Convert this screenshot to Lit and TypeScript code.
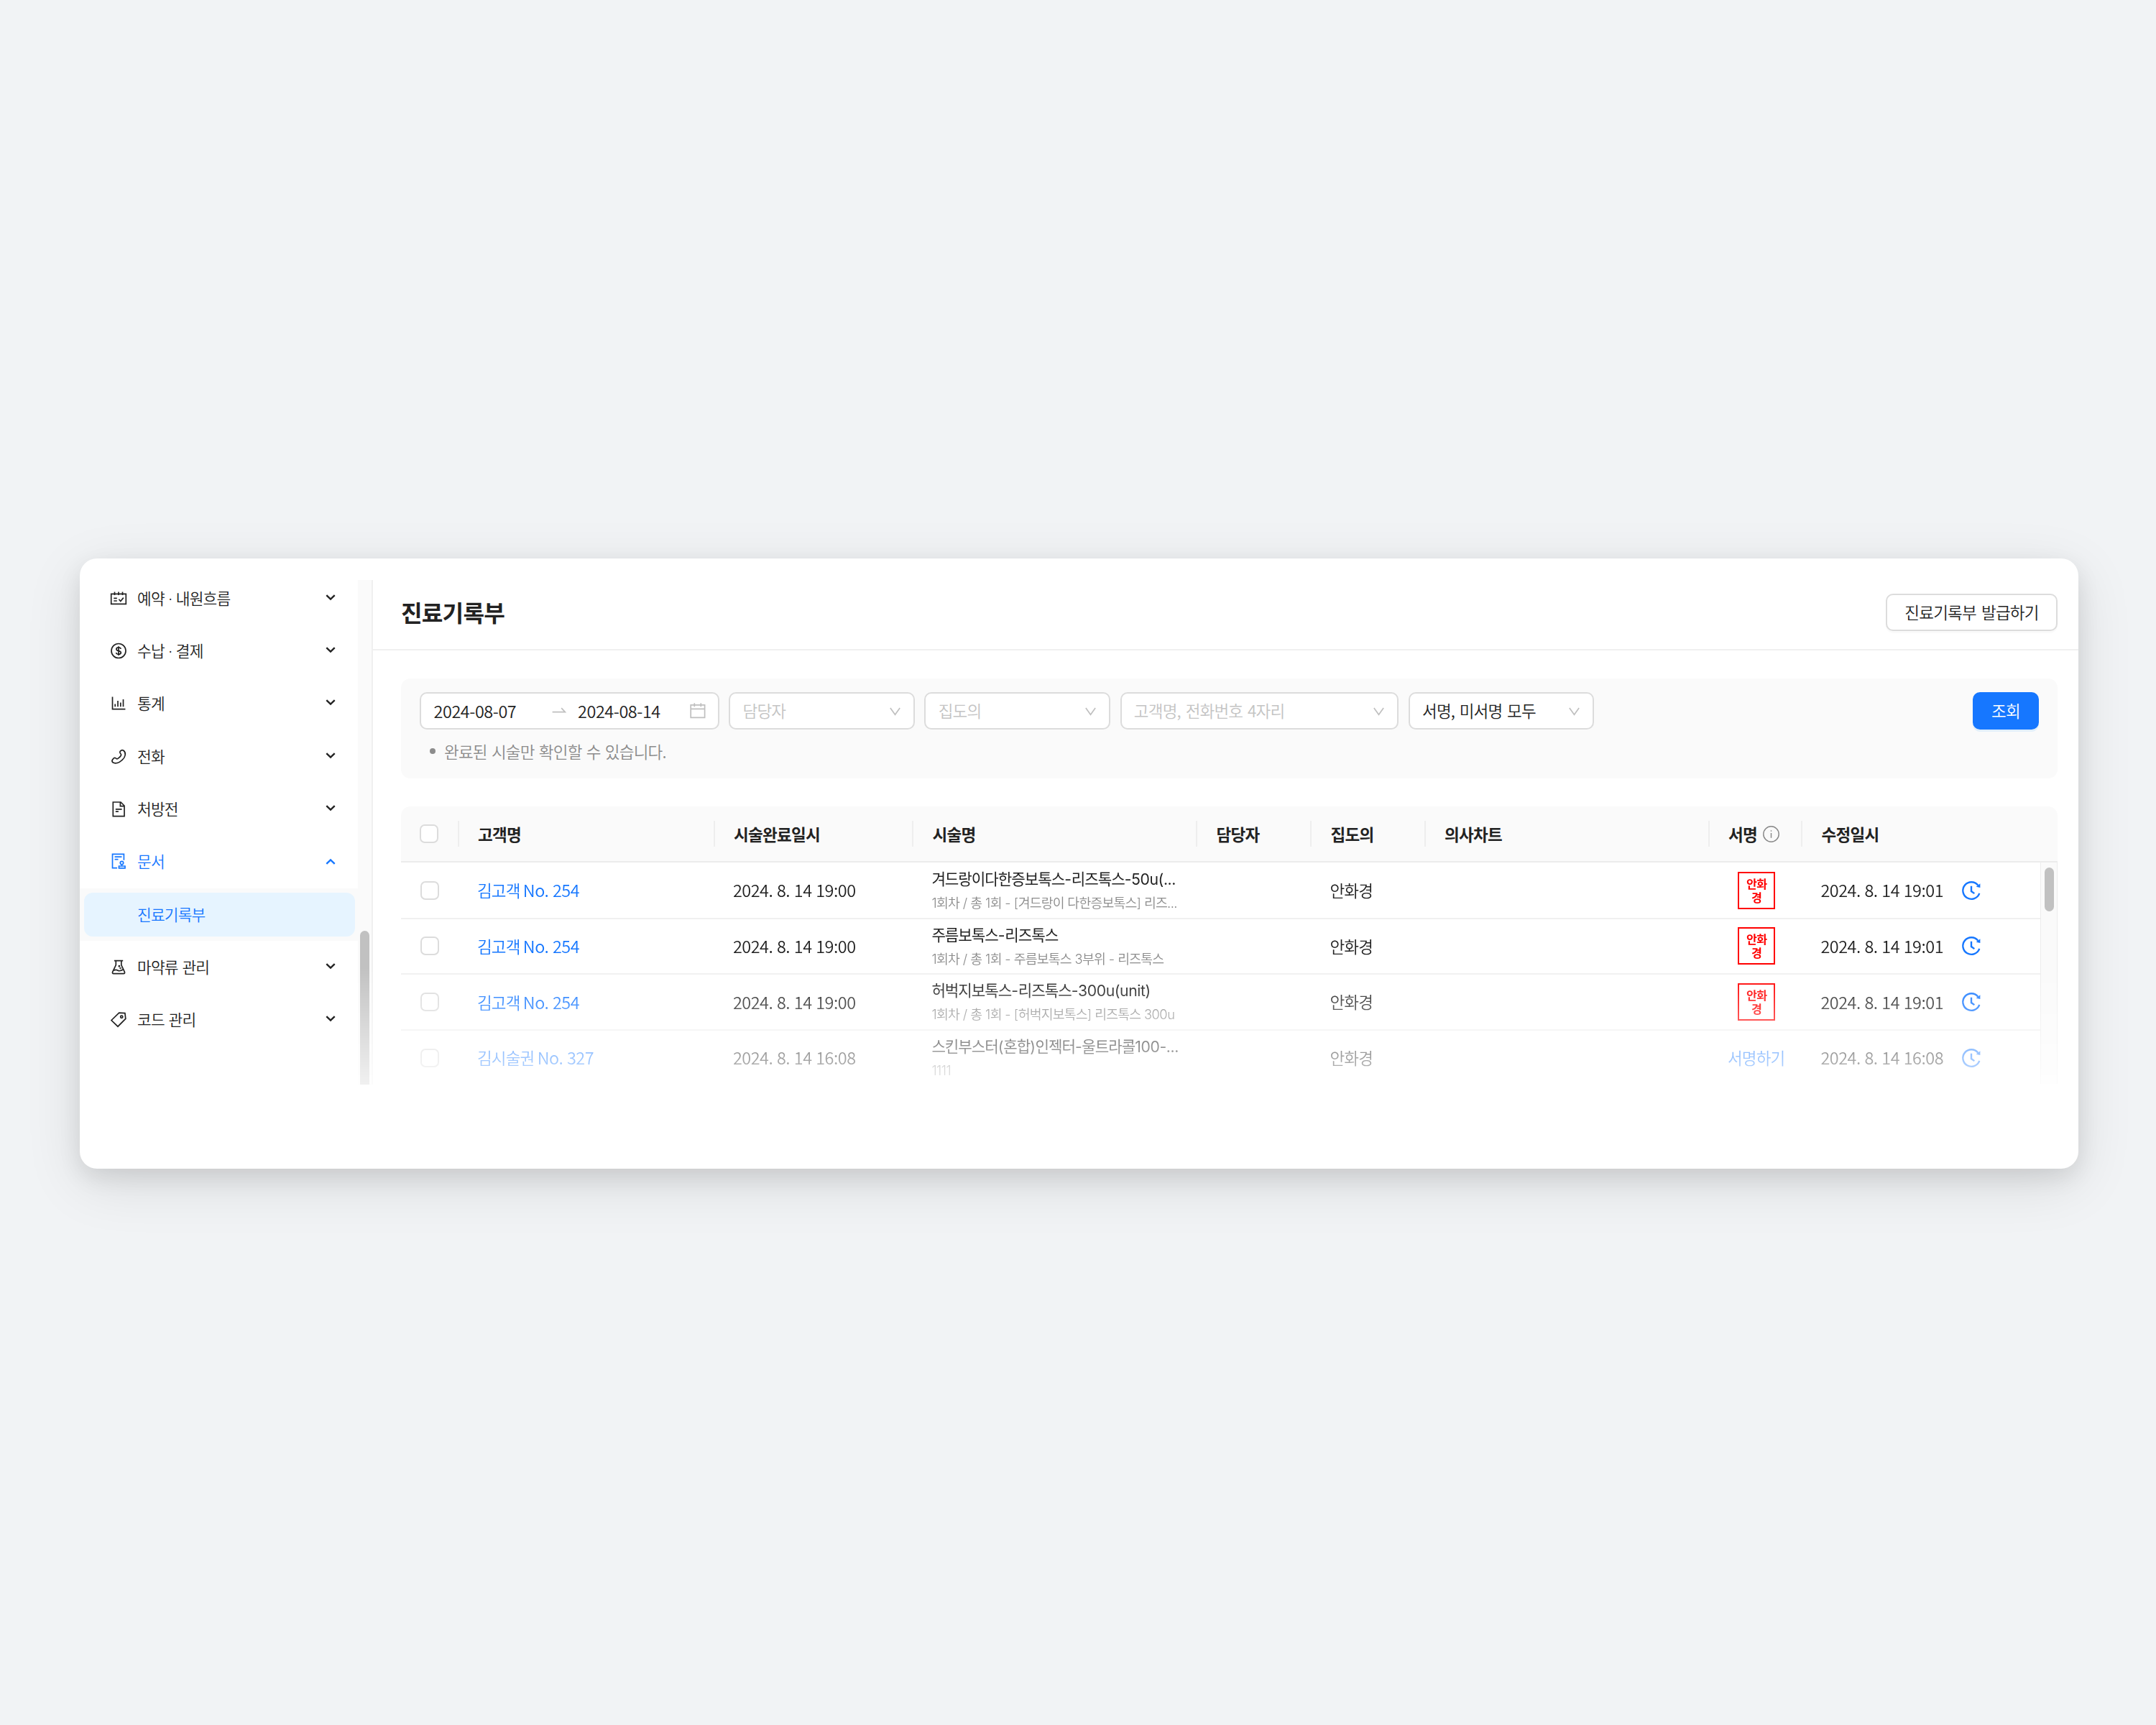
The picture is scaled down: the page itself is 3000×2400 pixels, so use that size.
import { LitElement, html, css, svg, nothing, type TemplateResult } from "lit";
import { customElement, property } from "lit/decorators.js";
import { classMap } from "lit/directives/class-map.js";

const ICONS: Record<string, TemplateResult> = {
  schedule: svg`<path d="M1.7 5.4H22.3V19.4H1.7zM6.5 2.6V7M12 2.6V7M17.5 2.6V7M5.3 11.4H9.8M5.3 15H9.8M12.4 12.8l2.4 2.7 4-4.9"/>`,
  payment: svg`<circle cx="12" cy="11.5" r="10"/><path d="M15.2 8.9C14.9 7.5 13.7 6.9 12 6.9 10.2 6.9 8.9 7.7 8.9 9.2 8.9 12.5 15.3 10.6 15.3 14 15.3 15.5 13.9 16.3 12 16.3 10.1 16.3 8.8 15.6 8.6 14M12 5.2V17.9"/>`,
  stats: svg`<path d="M3.5 2.5V19.6H21.4M7.2 12.6V16.3M11 8V16.3M14.8 10.6V16.3M18.5 6V16.3"/>`,
  phone: svg`<path d="M15.2 3.4Q17 1.8 18.9 3.2C22.8 6.2 21.8 12 17.3 16.2C12.8 20.4 7.5 22 4 19.8Q2 18 3.8 15.6L5.4 13.8Q6.8 12.8 8 13.8Q9.3 15.4 10.8 14.6Q13.7 12.9 15.3 10.3Q16.2 8.8 14.8 7.6Q13.3 6 14 4.6Z"/>`,
  prescription: svg`<path d="M4.3 2H15L20 7V21.6H4.3zM14.4 2.2V7.6H19.8M7.8 11.9H16.6M7.8 15.2H11.9"/>`,
  document: svg`<path d="M10 20.6H3.5V1.3H19.4V9.8M6.6 5.1H16.5M6.6 8.7H11.5"/><circle cx="16.5" cy="13.6" r="2.2"/><path d="M16.5 15.8V18M12.5 18H21V20.8H12.5z"/>`,
  flask: svg`<path d="M5.9 2.6H18.2M8.3 2.6V8.6L3.6 18.4Q3 20.6 5 20.6H19Q21 20.6 20.4 18.4L15.8 8.6V2.6M5.3 16.3Q8 14.6 11 16.2T18.6 14.8"/><circle class="solid" cx="12.9" cy="10.3" r=".6"/><circle class="solid" cx="14.6" cy="13" r=".4"/>`,
  tag: svg`<path d="M2 12.5L12.7 2.2 20.9 2.6 21.8 10.4 11 21.2z"/><circle cx="16.2" cy="7.7" r="1.6"/>`,
  calendar: svg`<path d="M2.2 3.9H21.6V21.4H2.2zM2.2 9.4H21.6M7.3 1.3V6.2M16.3 1.3V6.2"/>`,
  swap: svg`<path d="M2.6 13.6H20.3L15.2 8.2"/>`,
  chevron: svg`<path d="M6.3 9.2L12 14.6 17.7 9.2"/>`,
  arrow: svg`<path d="M4.4 6.8L12 17.4 19.6 6.8"/>`,
  info: svg`<circle cx="12" cy="12" r="11.2"/><path d="M12 10.4V17.4M12 6.6V8.2"/>`,
  history: svg`<path d="M20.6 5.2A10.9 10.9 0 1 0 22.4 15.6M12 6.2V13L16 15.8"/><path class="head" d="M23.4 3V8.4L18.2 7.2z"/>`,
};

@customElement("ui-icon")
class UiIcon extends LitElement {
  @property() name = "";
  static styles = css`
    :host { display: inline-flex; flex: none; width: 24px; height: 24px; }
    svg { width: 100%; height: 100%; fill: none; stroke: currentColor; stroke-width: var(--stroke, 1.7); overflow: visible; }
    .solid { fill: currentColor; }
    .head { fill: currentColor; stroke: none; }
  `;
  render() {
    return html`<svg viewBox="0 0 24 24">${ICONS[this.name] ?? nothing}</svg>`;
  }
}

@customElement("side-menu")
class SideMenu extends LitElement {
  private items = [
    { icon: "schedule", label: "예약 · 내원흐름" },
    { icon: "payment", label: "수납 · 결제" },
    { icon: "stats", label: "통계" },
    { icon: "phone", label: "전화" },
    { icon: "prescription", label: "처방전" },
    { icon: "document", label: "문서", children: ["진료기록부"] },
    { icon: "flask", label: "마약류 관리" },
    { icon: "tag", label: "코드 관리" },
  ];
  static styles = css`
    :host { display: flex; font-family: "Noto Sans", "Noto Sans CJK KR", sans-serif; }
    nav { width: 387px; padding-top: 19px; }
    .item { display: flex; align-items: center; height: 73.35px; box-sizing: border-box; padding: 0 26.5px 0 41.5px; color: #222; font-size: 21.4px; letter-spacing: -0.8px; word-spacing: 1px; }
    .item .label { flex: 1; padding-left: 14.6px; white-space: nowrap; }
    .chev { --stroke: 2.4; margin-top: -4px; }
    .open { color: #1677ff; }
    .open .chev { transform: rotate(180deg); margin-top: 0; }
    .sub { background: #fafafa; height: 73.35px; box-sizing: border-box; padding: 6px 4px 6px 6px; }
    .leaf { display: flex; align-items: center; height: 100%; box-sizing: border-box; border-radius: 12px; background: #e6f4ff; color: #1677ff; font-size: 21.4px; letter-spacing: -0.8px; padding-left: 74px; }
    .track { width: 21px; height: 702px; margin-top: 30px; box-sizing: border-box; background: #fafafa; border-right: 2px solid #f0f0f0; display: flex; flex-direction: column; justify-content: flex-end; align-items: center; -webkit-mask-image: linear-gradient(#000 539px, transparent 752px); mask-image: linear-gradient(#000 539px, transparent 752px); }
    .thumb { width: 13px; height: 214px; border-radius: 7px 7px 0 0; background: #c1c1c1; }
  `;
  render() {
    return html`<nav>
        ${this.items.map(
          (i) => html`<div class=${classMap({ item: true, open: !!i.children })}>
              <ui-icon name=${i.icon}></ui-icon><span class="label">${i.label}</span><ui-icon class="chev" name="chevron"></ui-icon>
            </div>
            ${i.children?.map((c) => html`<div class="sub"><div class="leaf">${c}</div></div>`) ?? nothing}`
        )}
      </nav>
      <div class="track"><div class="thumb"></div></div>`;
  }
}

interface Chart {
  name: string;
  no: string;
  done: string;
  title: string;
  detail: string;
  doctor: string;
  stamp?: string[];
  edited: string;
}

// Latin runs are tracked more loosely than Hangul, so each gets its own span.
const tracked = (text: string) =>
  (text.match(/[\x20-\x7e]+|[^\x20-\x7e]+/g) ?? []).map((run) => (/^[\x20-\x7e]/.test(run) ? html`<span class="latin">${run}</span>` : run));

@customElement("chart-table")
class ChartTable extends LitElement {
  private rows: Chart[] = [
    { name: "김고객", no: "No. 254", done: "2024. 8. 14 19:00", title: "겨드랑이다한증보톡스-리즈톡스-50u(...", detail: "1회차 / 총 1회 - [겨드랑이 다한증보톡스] 리즈...", doctor: "안화경", stamp: ["안화", "경"], edited: "2024. 8. 14 19:01" },
    { name: "김고객", no: "No. 254", done: "2024. 8. 14 19:00", title: "주름보톡스-리즈톡스", detail: "1회차 / 총 1회 - 주름보톡스 3부위 - 리즈톡스", doctor: "안화경", stamp: ["안화", "경"], edited: "2024. 8. 14 19:01" },
    { name: "김고객", no: "No. 254", done: "2024. 8. 14 19:00", title: "허벅지보톡스-리즈톡스-300u(unit)", detail: "1회차 / 총 1회 - [허벅지보톡스] 리즈톡스 300u", doctor: "안화경", stamp: ["안화", "경"], edited: "2024. 8. 14 19:01" },
    { name: "김시술권", no: "No. 327", done: "2024. 8. 14 16:08", title: "스킨부스터(혼합)인젝터-울트라콜100-...", detail: "1111", doctor: "안화경", edited: "2024. 8. 14 16:08" },
  ];
  static styles = css`
    :host { display: block; width: 2305px; }
    .grid { display: grid; grid-template-columns: 80.7px 356px 276.5px 395px 159px 158.5px 395px 129.5px 1fr; align-items: center; }
    .head { height: 77.5px; box-sizing: border-box; padding-top: 1px; background: #fafafa; border-bottom: 2px solid #ececec; border-radius: 13px 13px 0 0; font-weight: 600; color: #222; }
    .th { display: flex; align-items: center; height: 36px; padding-left: 26.2px; border-right: 2px solid #eee; box-sizing: border-box; letter-spacing: -0.7px; white-space: nowrap; }
    .th.last { border: 0; }
    .info { --stroke: 1.5; color: #888; width: 23px; height: 23px; margin-left: 8.5px; }
    .box { width: 26px; height: 26px; box-sizing: border-box; border: 2px solid #dcdcdc; border-radius: 7px; background: #fff; }
    .pick { padding-left: 26.6px; }
    .body { display: flex; height: 308.5px; overflow: hidden; -webkit-mask-image: linear-gradient(#000 147px, transparent 360px); mask-image: linear-gradient(#000 147px, transparent 360px); }
    .rows { width: 2281px; flex: none; padding-top: 1.5px; }
    .row { height: 77.6px; box-sizing: border-box; border-bottom: 2px solid #f0f0f0; }
    .td { padding-left: 25.2px; white-space: nowrap; letter-spacing: -0.8px; color: #222; }
    .num { font-size: 23.4px; letter-spacing: -0.46px; word-spacing: 0.9px; }
    .link { color: #1677ff; }
    .proc { display: flex; flex-direction: column; font-family: Inter, "Noto Sans CJK KR", sans-serif; padding-top: 3px; font-kerning: none; }
    .title { font-size: 21.2px; letter-spacing: -1px; line-height: 33px; font-weight: 400; }
    .title .latin { letter-spacing: -0.4px; }
    .detail { font-size: 18.3px; letter-spacing: -0.8px; line-height: 33px; color: #8c8c8c; }
    .detail .latin { letter-spacing: -0.5px; }
    .stamp { width: 52px; height: 52px; box-sizing: border-box; border: 2px solid #f00; margin-left: 14.3px; display: flex; flex-direction: column; align-items: center; justify-content: center; color: #f00; font-size: 16.2px; font-weight: 600; line-height: 19px; letter-spacing: -0.7px; }
    .edit { display: flex; align-items: center; justify-content: space-between; padding-right: 83px; }
    .hist { --stroke: 2.2; width: 26px; height: 26px; color: #1677ff; }
    .track { flex: 1; box-sizing: border-box; background: #fafafa; border: 0 solid #ececec; border-width: 0 1.5px; padding: 7px 0 0 4.5px; }
    .thumb { width: 13px; height: 61px; border-radius: 7px; background: #c1c1c1; }
  `;
  render() {
    return html`<div class="grid head">
        <div class="th"><div class="box"></div></div>
        ${["고객명", "시술완료일시", "시술명", "담당자", "집도의", "의사차트"].map((h) => html`<div class="th">${h}</div>`)}
        <div class="th">서명<ui-icon class="info" name="info"></ui-icon></div>
        <div class="th last">수정일시</div>
      </div>
      <div class="body">
        <div class="rows">
          ${this.rows.map(
            (r) => html`<div class="grid row">
              <div class="pick"><div class="box"></div></div>
              <div class="td link">${r.name} <span class="num">${r.no}</span></div>
              <div class="td num">${r.done}</div>
              <div class="td proc"><span class="title">${tracked(r.title)}</span><span class="detail">${tracked(r.detail)}</span></div>
              <div></div>
              <div class="td">${r.doctor}</div>
              <div></div>
              <div class="td">
                ${r.stamp ? html`<div class="stamp">${r.stamp.map((s) => html`<span>${s}</span>`)}</div>` : html`<span class="link">서명하기</span>`}
              </div>
              <div class="td num edit">${r.edited}<ui-icon class="hist" name="history"></ui-icon></div>
            </div>`
          )}
        </div>
        <div class="track"><div class="thumb"></div></div>
      </div>`;
  }
}

@customElement("app-root")
class AppRoot extends LitElement {
  static styles = css`
    :host { display: block; width: 3000px; height: 2400px; box-sizing: border-box; padding: 777px 0 0 111px; background: #f1f3f5; font-family: "Noto Sans CJK KR", "Noto Sans", sans-serif; font-weight: 350; font-size: 22.5px; line-height: 1.4; letter-spacing: -0.8px; color: #222; }
    .card { width: 2781px; height: 849px; border-radius: 24px; background: #fff; display: flex; box-shadow: 0 12px 32px rgba(0, 0, 0, 0.09), 0 20px 80px rgba(0, 0, 0, 0.11); }
    main { flex: 1; }
    header { height: 128px; box-sizing: border-box; border-bottom: 2px solid #f0f0f0; padding: 24px 29px 0 39px; display: flex; justify-content: space-between; align-items: center; }
    h1 { margin: 0; font-size: 32.2px; font-weight: 600; letter-spacing: -0.8px; }
    .btn { height: 52px; box-sizing: border-box; display: flex; align-items: center; justify-content: center; border-radius: 10px; border: 2px solid #dcdcdc; background: #fff; box-shadow: 0 3px 0 rgba(0, 0, 0, 0.02); white-space: nowrap; }
    .issue { width: 239px; word-spacing: 3px; }
    .search { width: 92px; margin-left: auto; background: #1677ff; border-color: #1677ff; color: #fff; box-shadow: 0 3px 0 rgba(5, 145, 255, 0.1); }
    .filters { margin: 38.5px 0 0 39px; width: 2305px; height: 139.5px; box-sizing: border-box; background: #fafafa; border-radius: 13px; padding: 19.5px 26px 0 25.5px; }
    .bar { display: flex; gap: 13.7px; }
    .field { width: 258.5px; height: 52px; box-sizing: border-box; border: 2px solid #dcdcdc; border-radius: 10px; background: #fff; display: flex; align-items: center; padding: 0 15px 0 17.3px; justify-content: space-between; white-space: nowrap; color: #c4c4c4; }
    .field.wide { width: 387.5px; word-spacing: 2.6px; }
    .field .set { color: #222; word-spacing: 2.4px; }
    .arrow { width: 21px; height: 21px; --stroke: 1.9; color: #bfbfbf; }
    .field.dates { width: 417px; color: #222; justify-content: flex-start; padding: 0 15.5px 0 18px; font-size: 23.4px; letter-spacing: -0.4px; }
    .dates .from { width: 162.5px; }
    .dates .swap { color: #bfbfbf; margin-right: 14px; }
    .dates .cal { color: #bfbfbf; margin-left: auto; width: 24px; height: 24px; }
    .note { display: flex; align-items: center; margin-top: 14.5px; color: #8c8c8c; word-spacing: 2px; padding-left: 14.5px; gap: 12px; }
    .dot { width: 8px; height: 8px; border-radius: 50%; background: #8c8c8c; }
    chart-table { margin: 39px 0 0 39px; }
  `;
  render() {
    return html`<div class="card">
      <side-menu></side-menu>
      <main>
        <header>
          <h1>진료기록부</h1>
          <div class="btn issue">진료기록부 발급하기</div>
        </header>
        <section class="filters">
          <div class="bar">
            <div class="field dates">
              <span class="from">2024-08-07</span><ui-icon class="swap" name="swap"></ui-icon><span>2024-08-14</span
              ><ui-icon class="cal" name="calendar"></ui-icon>
            </div>
            <div class="field">담당자<ui-icon class="arrow" name="arrow"></ui-icon></div>
            <div class="field">집도의<ui-icon class="arrow" name="arrow"></ui-icon></div>
            <div class="field wide">고객명, 전화번호 4자리<ui-icon class="arrow" name="arrow"></ui-icon></div>
            <div class="field"><span class="set">서명, 미서명 모두</span><ui-icon class="arrow" name="arrow"></ui-icon></div>
            <div class="btn search">조회</div>
          </div>
          <div class="note"><span class="dot"></span>완료된 시술만 확인할 수 있습니다.</div>
        </section>
        <chart-table></chart-table>
      </main>
    </div>`;
  }
}
